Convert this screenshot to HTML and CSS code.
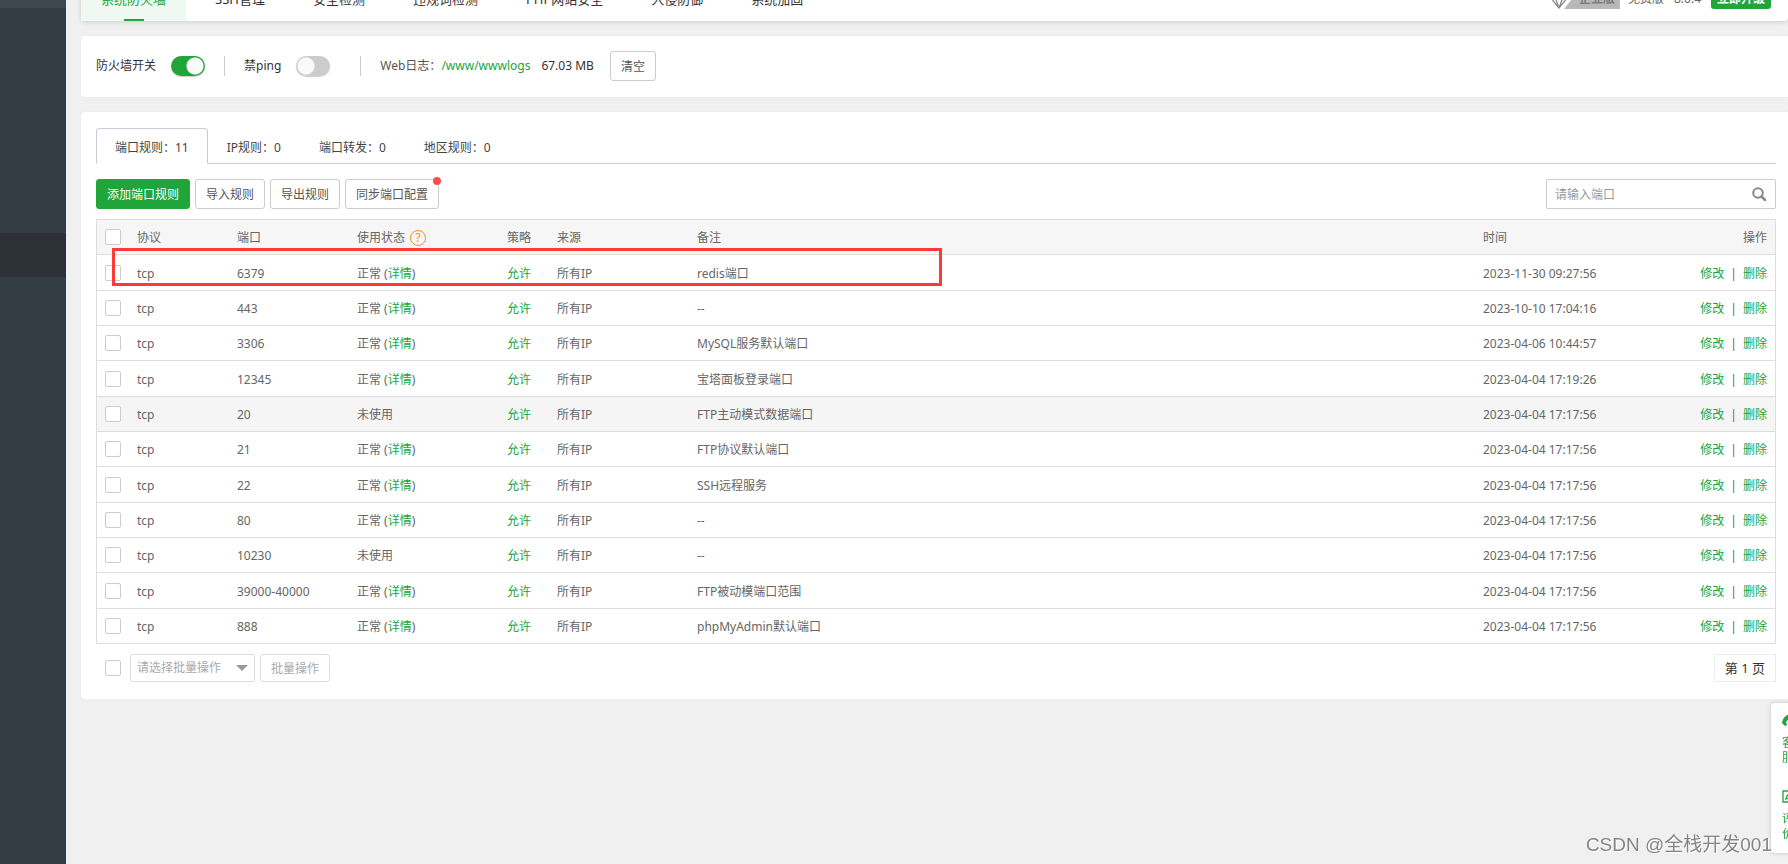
FILE: index.html
```html
<!DOCTYPE html>
<html lang="zh-CN">
<head>
<meta charset="utf-8">
<title>系统防火墙</title>
<link rel="stylesheet" href="styles.css">
</head>
<body>
<div class="app">
  <aside class="sidebar">
    <div class="side-head"></div>
    <div class="side-gap"></div>
    <div class="side-active"></div>
  </aside>
  <main class="main">
    <header class="topbar">
      <nav class="topnav">
        <a class="topnav-item active" href="#">系统防火墙</a>
        <a class="topnav-item" href="#">SSH管理</a>
        <a class="topnav-item" href="#">安全检测</a>
        <a class="topnav-item" href="#">违规词检测</a>
        <a class="topnav-item" href="#">PHP网站安全</a>
        <a class="topnav-item" href="#">入侵防御</a>
        <a class="topnav-item" href="#">系统加固</a>
      </nav>
      <div class="edition">
        <div class="badge">
          <svg class="diamond" viewBox="0 0 20 20" width="20" height="20" fill="none" stroke="#8a8a8a" stroke-width="1.3"><path d="M4 2h12l3 6-9 11L1 8zM1 8h18M6 8l4 11 4-11M4 2l2 6 4-6 4 6 2-6"/></svg>
          <span class="badge-text">企业版</span>
        </div>
        <span>免费版</span>
        <span class="version">8.0.4</span>
        <button class="upgrade" type="button">立即升级</button>
      </div>
    </header>

    <section class="card switches">
      <label class="switch-label" for="fw">防火墙开关</label>
      <input class="switch" id="fw" type="checkbox" role="switch" checked>
      <span class="divider"></span>
      <label class="switch-label" for="ping">禁ping</label>
      <input class="switch" id="ping" type="checkbox" role="switch">
      <span class="divider wide"></span>
      <div class="weblog">
        <span>Web日志：</span><a class="link" href="#">/www/wwwlogs</a><span class="size">67.03 MB</span>
        <button class="btn" type="button">清空</button>
      </div>
    </section>

    <section class="card rules">
      <div class="tabs">
        <button class="tab on" type="button">端口规则：11</button>
        <button class="tab" type="button">IP规则：0</button>
        <button class="tab" type="button">端口转发：0</button>
        <button class="tab" type="button">地区规则：0</button>
      </div>
      <div class="tools">
        <button class="btn primary" type="button">添加端口规则</button>
        <button class="btn" type="button">导入规则</button>
        <button class="btn" type="button">导出规则</button>
        <button class="btn dotted" type="button">同步端口配置</button>
        <div class="search">
          <input type="text" placeholder="请输入端口" aria-label="请输入端口">
          <button class="search-btn" type="button" aria-label="搜索"><svg viewBox="0 0 14 14" width="14" height="14" fill="none" stroke="#888" stroke-width="2"><circle cx="6" cy="6" r="4.8"/><path d="M9.4 9.4l3.6 3.6" stroke-width="2.6" stroke-linecap="round"/></svg></button>
        </div>
      </div>
      <div class="table-wrap">
        <table class="grid">
          <colgroup><col class="c-check"><col class="c-proto"><col class="c-port"><col class="c-state"><col class="c-policy"><col class="c-source"><col><col class="c-time"><col class="c-ops"></colgroup>
          <thead>
            <tr><th><input class="check" type="checkbox" aria-label="全选"></th><th>协议</th><th>端口</th><th><span class="state-head">使用状态<a class="help" href="#" aria-label="帮助">?</a></span></th><th>策略</th><th>来源</th><th>备注</th><th>时间</th><th class="ops">操作</th></tr>
          </thead>
          <tbody>
            <tr><td><input class="check" type="checkbox" aria-label="6379"></td><td>tcp</td><td>6379</td><td>正常 (<a class="link" href="#">详情</a>)</td><td><a class="link" href="#">允许</a></td><td>所有IP</td><td>redis端口</td><td>2023-11-30 09:27:56</td><td class="ops"><a class="link" href="#">修改</a><i>|</i><a class="link" href="#">删除</a></td></tr>
            <tr><td><input class="check" type="checkbox" aria-label="443"></td><td>tcp</td><td>443</td><td>正常 (<a class="link" href="#">详情</a>)</td><td><a class="link" href="#">允许</a></td><td>所有IP</td><td>--</td><td>2023-10-10 17:04:16</td><td class="ops"><a class="link" href="#">修改</a><i>|</i><a class="link" href="#">删除</a></td></tr>
            <tr><td><input class="check" type="checkbox" aria-label="3306"></td><td>tcp</td><td>3306</td><td>正常 (<a class="link" href="#">详情</a>)</td><td><a class="link" href="#">允许</a></td><td>所有IP</td><td>MySQL服务默认端口</td><td>2023-04-06 10:44:57</td><td class="ops"><a class="link" href="#">修改</a><i>|</i><a class="link" href="#">删除</a></td></tr>
            <tr><td><input class="check" type="checkbox" aria-label="12345"></td><td>tcp</td><td>12345</td><td>正常 (<a class="link" href="#">详情</a>)</td><td><a class="link" href="#">允许</a></td><td>所有IP</td><td>宝塔面板登录端口</td><td>2023-04-04 17:19:26</td><td class="ops"><a class="link" href="#">修改</a><i>|</i><a class="link" href="#">删除</a></td></tr>
            <tr class="hover"><td><input class="check" type="checkbox" aria-label="20"></td><td>tcp</td><td>20</td><td>未使用</td><td><a class="link" href="#">允许</a></td><td>所有IP</td><td>FTP主动模式数据端口</td><td>2023-04-04 17:17:56</td><td class="ops"><a class="link" href="#">修改</a><i>|</i><a class="link" href="#">删除</a></td></tr>
            <tr><td><input class="check" type="checkbox" aria-label="21"></td><td>tcp</td><td>21</td><td>正常 (<a class="link" href="#">详情</a>)</td><td><a class="link" href="#">允许</a></td><td>所有IP</td><td>FTP协议默认端口</td><td>2023-04-04 17:17:56</td><td class="ops"><a class="link" href="#">修改</a><i>|</i><a class="link" href="#">删除</a></td></tr>
            <tr><td><input class="check" type="checkbox" aria-label="22"></td><td>tcp</td><td>22</td><td>正常 (<a class="link" href="#">详情</a>)</td><td><a class="link" href="#">允许</a></td><td>所有IP</td><td>SSH远程服务</td><td>2023-04-04 17:17:56</td><td class="ops"><a class="link" href="#">修改</a><i>|</i><a class="link" href="#">删除</a></td></tr>
            <tr><td><input class="check" type="checkbox" aria-label="80"></td><td>tcp</td><td>80</td><td>正常 (<a class="link" href="#">详情</a>)</td><td><a class="link" href="#">允许</a></td><td>所有IP</td><td>--</td><td>2023-04-04 17:17:56</td><td class="ops"><a class="link" href="#">修改</a><i>|</i><a class="link" href="#">删除</a></td></tr>
            <tr><td><input class="check" type="checkbox" aria-label="10230"></td><td>tcp</td><td>10230</td><td>未使用</td><td><a class="link" href="#">允许</a></td><td>所有IP</td><td>--</td><td>2023-04-04 17:17:56</td><td class="ops"><a class="link" href="#">修改</a><i>|</i><a class="link" href="#">删除</a></td></tr>
            <tr><td><input class="check" type="checkbox" aria-label="39000-40000"></td><td>tcp</td><td>39000-40000</td><td>正常 (<a class="link" href="#">详情</a>)</td><td><a class="link" href="#">允许</a></td><td>所有IP</td><td>FTP被动模端口范围</td><td>2023-04-04 17:17:56</td><td class="ops"><a class="link" href="#">修改</a><i>|</i><a class="link" href="#">删除</a></td></tr>
            <tr><td><input class="check" type="checkbox" aria-label="888"></td><td>tcp</td><td>888</td><td>正常 (<a class="link" href="#">详情</a>)</td><td><a class="link" href="#">允许</a></td><td>所有IP</td><td>phpMyAdmin默认端口</td><td>2023-04-04 17:17:56</td><td class="ops"><a class="link" href="#">修改</a><i>|</i><a class="link" href="#">删除</a></td></tr>
          </tbody>
        </table>
        <div class="marker"></div>
      </div>
      <div class="batch">
        <input class="check" type="checkbox" aria-label="批量选择">
        <div class="select">
          <select aria-label="批量操作"><option>请选择批量操作</option></select>
        </div>
        <button class="btn muted" type="button">批量操作</button>
        <span class="pager">第 1 页</span>
      </div>
    </section>
  </main>
</div>
<aside class="service">
  <a class="service-item" href="#"><svg viewBox="0 0 20 16" width="20" height="16"><path d="M0 10C1 4 5 1 10 1s9 3 10 9l-3 2-2-4c-3 0-5-3-7-2-3 1-3 2-4 3l1 3-2 1z" fill="#20a53a"/></svg><span>客服</span></a>
  <a class="service-item" href="#"><svg viewBox="0 0 16 16" width="16" height="16" fill="none" stroke="#20a53a" stroke-width="1.3"><path d="M14 7v6H1V2h9M4 10l1-3 7-6 2 2-7 6z"/></svg><span>评价</span></a>
</aside>
<div class="watermark">CSDN @全栈开发001</div>
</body>
</html>
```
FILE: styles.css
```css
* { box-sizing: border-box; }
body {
  margin: 0;
  overflow: hidden;
  background: #f0f0f0;
  color: #666;
  font: 12px/18px "Noto Sans", "Noto Sans CJK SC", sans-serif;
}
button, input, select { font: inherit; color: inherit; margin: 0; }
a { text-decoration: none; color: inherit; }
.link { color: #20a53a; }

.app { display: flex; min-height: 100vh; }
.sidebar { flex: 0 0 66px; background: #353d44; }
.side-head { height: 8px; background: #3f4650; }
.side-gap { height: 225px; }
.side-active { height: 44px; background: #2c3138; }
.main { flex: 1; min-width: 0; padding-left: 15px; }

.topbar {
  display: flex;
  align-items: center;
  justify-content: space-between;
  height: 44px;
  margin-top: -23px;
  padding-right: 17px;
  background: #fff;
  border-radius: 4px;
  box-shadow: 0 1px 5px rgba(0, 0, 0, 0.15);
  font-size: 13px;
  color: #333;
}
.topnav { display: flex; height: 100%; }
.topnav-item { padding: 0 24px; line-height: 44px; white-space: nowrap; }
.topnav-item.active {
  position: relative;
  margin-right: 5px;
  padding: 0 20px;
  background: #eff9f1;
  color: #20a53a;
}
.topnav-item.active::after {
  content: "";
  position: absolute;
  left: 50%;
  bottom: 0;
  width: 20px;
  height: 2px;
  margin-left: -10px;
  background: #20a53a;
}
.edition { display: flex; align-items: center; font-size: 12px; color: #666; }
.badge { display: flex; align-items: center; margin-right: 8px; }
.diamond { margin-right: -5px; }
.badge-text {
  width: 56px;
  padding-left: 15px;
  background: #b8b8b8;
  clip-path: polygon(16px 0, 100% 0, 100% 100%, 0 100%);
  color: #7c7c7c;
  font-weight: bold;
  line-height: 20px;
}
.version { margin: 0 10px; }
.upgrade {
  width: 60px;
  height: 20px;
  padding: 0;
  border: 0;
  border-radius: 3px;
  background: #20a53a;
  color: #fff;
  font-weight: bold;
}

.card {
  margin-top: 15px;
  padding: 15px 12px 17px 15px;
  background: #fff;
  border-radius: 4px 0 0 4px;
  box-shadow: 0 0 2px rgba(0, 0, 0, 0.06);
}
.switches { display: flex; align-items: center; padding-bottom: 16px; }
.switch-label { color: #333; }
.switch {
  appearance: none;
  width: 34px;
  height: 20px;
  margin-left: 15px;
  border-radius: 10px;
  background: radial-gradient(circle at 10px 10px, #fafafa 8px, #ccc 9px);
  box-shadow: 0 1px 1px rgba(0, 0, 0, 0.2);
}
.switch:checked { background: radial-gradient(circle at 24px 10px, #fafafa 8px, #20a53a 9px); }
.divider { width: 1px; height: 20px; margin: 0 19px; background: #ccc; }
.divider.wide { margin-left: 30px; }
.weblog { display: flex; align-items: center; height: 30px; color: #555; }
.size { margin: 0 16px 0 11px; color: #333; }

.btn {
  height: 30px;
  padding: 1px 10px 0;
  border: 1px solid #ccc;
  border-radius: 3px;
  background: #fff;
  color: #555;
  white-space: nowrap;
}
.btn.primary { border-color: #20a53a; background: #20a53a; color: #fff; }
.btn.dotted { position: relative; }
.btn.dotted::after {
  content: "";
  position: absolute;
  top: -3px;
  right: -3px;
  width: 8px;
  height: 8px;
  border-radius: 50%;
  background: #ff4d4f;
}
.btn.muted { height: 28px; border-color: #ddd; color: #aaa; }

.tabs { display: flex; height: 36px; margin-top: 1px; border-bottom: 1px solid #cacad9; }
.tab { height: 36px; padding: 3px 18px 0; border: 1px solid transparent; background: none; color: #444; white-space: nowrap; }
.tab.on { border-color: #cacad9; border-bottom-color: #fff; border-radius: 4px 4px 0 0; background: #fff; }
.tools { display: flex; gap: 5px; margin-top: 15px; }
.search { display: flex; width: 230px; height: 30px; margin-left: auto; border: 1px solid #ccc; border-radius: 2px; }
.search input { flex: 1; min-width: 0; padding: 1px 8px 0; border: 0; background: none; }
.search input::placeholder { color: #999; }
.search-btn { display: flex; align-items: center; padding: 0 9px; border: 0; background: none; }

.table-wrap { position: relative; margin-top: 10px; }
.grid { width: 100%; table-layout: fixed; border-collapse: separate; border-spacing: 0; border: 1px solid #ddd; border-bottom: 0; }
.c-check { width: 32px; }
.c-proto { width: 100px; }
.c-port { width: 120px; }
.c-state, .c-time, .c-ops { width: 150px; }
.c-policy { width: 50px; }
.c-source { width: 140px; }
.grid th, .grid td { height: 35px; padding: 2px 8px 0; border-bottom: 1px solid #ddd; text-align: left; font-weight: normal; white-space: nowrap; }
.grid th:first-child, .grid td:first-child { padding-top: 0; }
.grid tbody tr:nth-child(3n+1) td { height: 36px; }
.grid th { background: #f6f6f6; }
.grid .hover td { background: #f5f5f5; }
.grid .ops { text-align: right; }
.ops i { margin: 0 6px; font-style: normal; }
.check {
  appearance: none;
  display: block;
  flex: none;
  width: 16px;
  height: 16px;
  border: 1px solid #ccc;
  border-radius: 2px;
  background: #fff;
}
.state-head { display: flex; align-items: center; gap: 5px; }
.help { width: 16px; height: 16px; border: 1px solid #ff8c1a; border-radius: 50%; color: #ff8c1a; line-height: 14px; text-align: center; }
.marker { position: absolute; left: 16px; top: 29px; width: 830px; height: 38px; border: 3px solid #ff3838; }

.batch { display: flex; align-items: center; margin-top: 10px; padding-left: 9px; }
.select { position: relative; width: 125px; margin: 0 5px 0 9px; }
.select select { appearance: none; display: block; width: 100%; height: 28px; padding: 0 6px; border: 1px solid #ddd; border-radius: 2px; background: #fff; color: #aaa; }
.select::after { content: ""; position: absolute; right: 7px; top: 11px; border: 6px solid transparent; border-top-color: #999; border-bottom: 0; pointer-events: none; }
.pager { margin-left: auto; padding: 4px 10px; border: 1px solid #ececec; color: #333; font-size: 13px; }

.service {
  position: fixed;
  right: -23px;
  bottom: 11px;
  width: 40px;
  height: 150px;
  padding: 10px 11px;
  border-radius: 4px;
  background: #fff;
  box-shadow: 0 0 4px rgba(0, 0, 0, 0.2);
  color: #20a53a;
}
.service-item { display: block; height: 76px; line-height: 15px; }
.service-item svg { display: block; margin-bottom: 6px; }
.service-item span { display: block; width: 12px; }
.watermark {
  position: fixed;
  right: 16px;
  bottom: 5px;
  color: #858585;
  font: 19px/28px "Liberation Sans", "Noto Sans CJK SC", sans-serif;
  text-shadow: 1px 1px 0 #fff;
}
```
